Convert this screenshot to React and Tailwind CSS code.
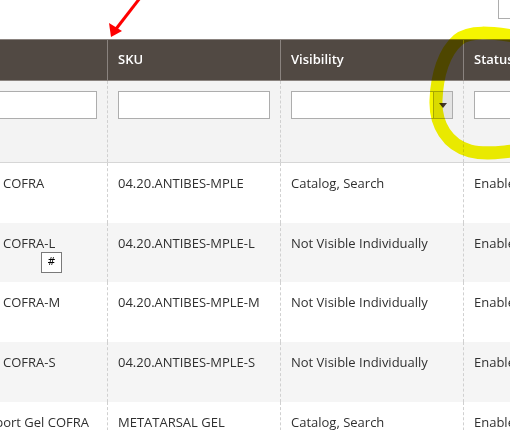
import React from 'react';

const rows = [
    { name: 'COFRA', sku: '04.20.ANTIBES-MPLE', vis: 'Catalog, Search', status: 'Enabled' },
    { name: 'COFRA-L', sku: '04.20.ANTIBES-MPLE-L', vis: 'Not Visible Individually', status: 'Enabled', handle: true },
    { name: 'COFRA-M', sku: '04.20.ANTIBES-MPLE-M', vis: 'Not Visible Individually', status: 'Enabled' },
    { name: 'COFRA-S', sku: '04.20.ANTIBES-MPLE-S', vis: 'Not Visible Individually', status: 'Enabled' },
    { name: 'Metatarsal Support Gel COFRA', sku: 'METATARSAL GEL', vis: 'Catalog, Search', status: 'Enabled', clipped: true },
];

const App = () => {
    return (
        <div className="relative w-[510px] h-[430px] overflow-hidden bg-white font-['Open_Sans',sans-serif] text-[13px] text-[#303030]">
            {/* top strip */}
            <div className="h-[39px] flex justify-end">
                <div className="w-[14px] h-[19px] -mr-[2px] border border-t-0 border-[#adadad] bg-white"></div>
            </div>

            {/* Column headers */}
            <div className="flex h-[42px] border-y border-[#8a837f] bg-[#514943] text-white font-semibold">
                <div className="w-[107px] shrink-0"></div>
                <div className="w-[173px] shrink-0 border-l border-[#8a837f] pl-[10px] flex items-center">SKU</div>
                <div className="w-[183px] shrink-0 border-l border-[#8a837f] pl-[10px] flex items-center">Visibility</div>
                <div className="flex-1 border-l border-[#8a837f] pl-[10px] flex items-center whitespace-nowrap">Status</div>
            </div>

            {/* Filters */}
            <div className="flex h-[82px] border-b border-[#d6d6d6] bg-[#f3f3f3]">
                <div className="w-[107px] shrink-0 pt-[10px] pr-[10px]">
                    <div className="h-[28px] border border-l-0 border-[#adadad] bg-white"></div>
                </div>
                <div className="w-[173px] shrink-0 border-l border-dashed border-[#d0d0d0] pt-[10px] px-[10px]">
                    <div className="h-[28px] border border-[#adadad] bg-white"></div>
                </div>
                <div className="w-[183px] shrink-0 border-l border-dashed border-[#d0d0d0] pt-[10px] px-[10px]">
                    <div className="h-[28px] border border-[#adadad] bg-white flex justify-end">
                        <div className="w-[19px] h-full bg-[#e3e3e3] border-l border-[#adadad] flex items-center justify-center">
                            <div className="w-0 h-0 border-x-[4px] border-x-transparent border-t-[5px] border-t-[#41362f]"></div>
                        </div>
                    </div>
                </div>
                <div className="flex-1 border-l border-dashed border-[#d0d0d0] pt-[10px] pl-[10px]">
                    <div className="h-[28px] w-[60px] border border-r-0 border-[#adadad] bg-white"></div>
                </div>
            </div>

            {/* Data rows */}
            {rows.map((row, i) => (
                <div key={i} className={`flex h-[59.7px] ${i % 2 === 1 ? 'bg-[#f5f5f5]' : 'bg-white'}`}>
                    <div className="w-[107px] shrink-0 pt-[11px] leading-[18px] overflow-hidden whitespace-nowrap">
                        {row.clipped ? (
                            <div className="flex justify-end pr-[18px]">{row.name}</div>
                        ) : (
                            <div className="pl-[3px]">{row.name}</div>
                        )}
                        {row.handle && (
                            <div className="ml-[41px] w-[21px] h-[21px] border border-[#7a7a7a] bg-white flex items-center justify-center text-[10px] font-['DejaVu_Sans',sans-serif] text-black">#</div>
                        )}
                    </div>
                    <div className="w-[173px] shrink-0 border-l border-dashed border-[#d0d0d0] pt-[11px] pl-[10px] leading-[18px] whitespace-nowrap">{row.sku}</div>
                    <div className="w-[183px] shrink-0 border-l border-dashed border-[#d0d0d0] pt-[11px] pl-[10px] leading-[18px] whitespace-nowrap">{row.vis}</div>
                    <div className="flex-1 border-l border-dashed border-[#d0d0d0] pt-[11px] pl-[10px] leading-[18px] whitespace-nowrap">{row.status}</div>
                </div>
            ))}

            {/* Annotations drawn on top of the screenshot */}
            <svg className="absolute inset-0 pointer-events-none" width="510" height="430" viewBox="0 0 510 430">
                <line x1="140" y1="-2" x2="116" y2="29" stroke="#ff0000" strokeWidth="3" />
                <polygon points="111,37 109,23 122,31" fill="#ff0000" />
            </svg>
            <svg className="absolute inset-0 pointer-events-none mix-blend-multiply" width="510" height="430" viewBox="0 0 510 430">
                <path
                    d="M 514 36 C 492 33, 470 30, 458 40 C 444 52, 437 75, 436 100 C 435 125, 448 145, 470 151 C 486 155, 500 152, 514 151"
                    fill="none"
                    stroke="#f5f500"
                    strokeWidth="13"
                    strokeLinecap="round"
                    strokeLinejoin="round"
                />
            </svg>
        </div>
    );
};

export default App;
